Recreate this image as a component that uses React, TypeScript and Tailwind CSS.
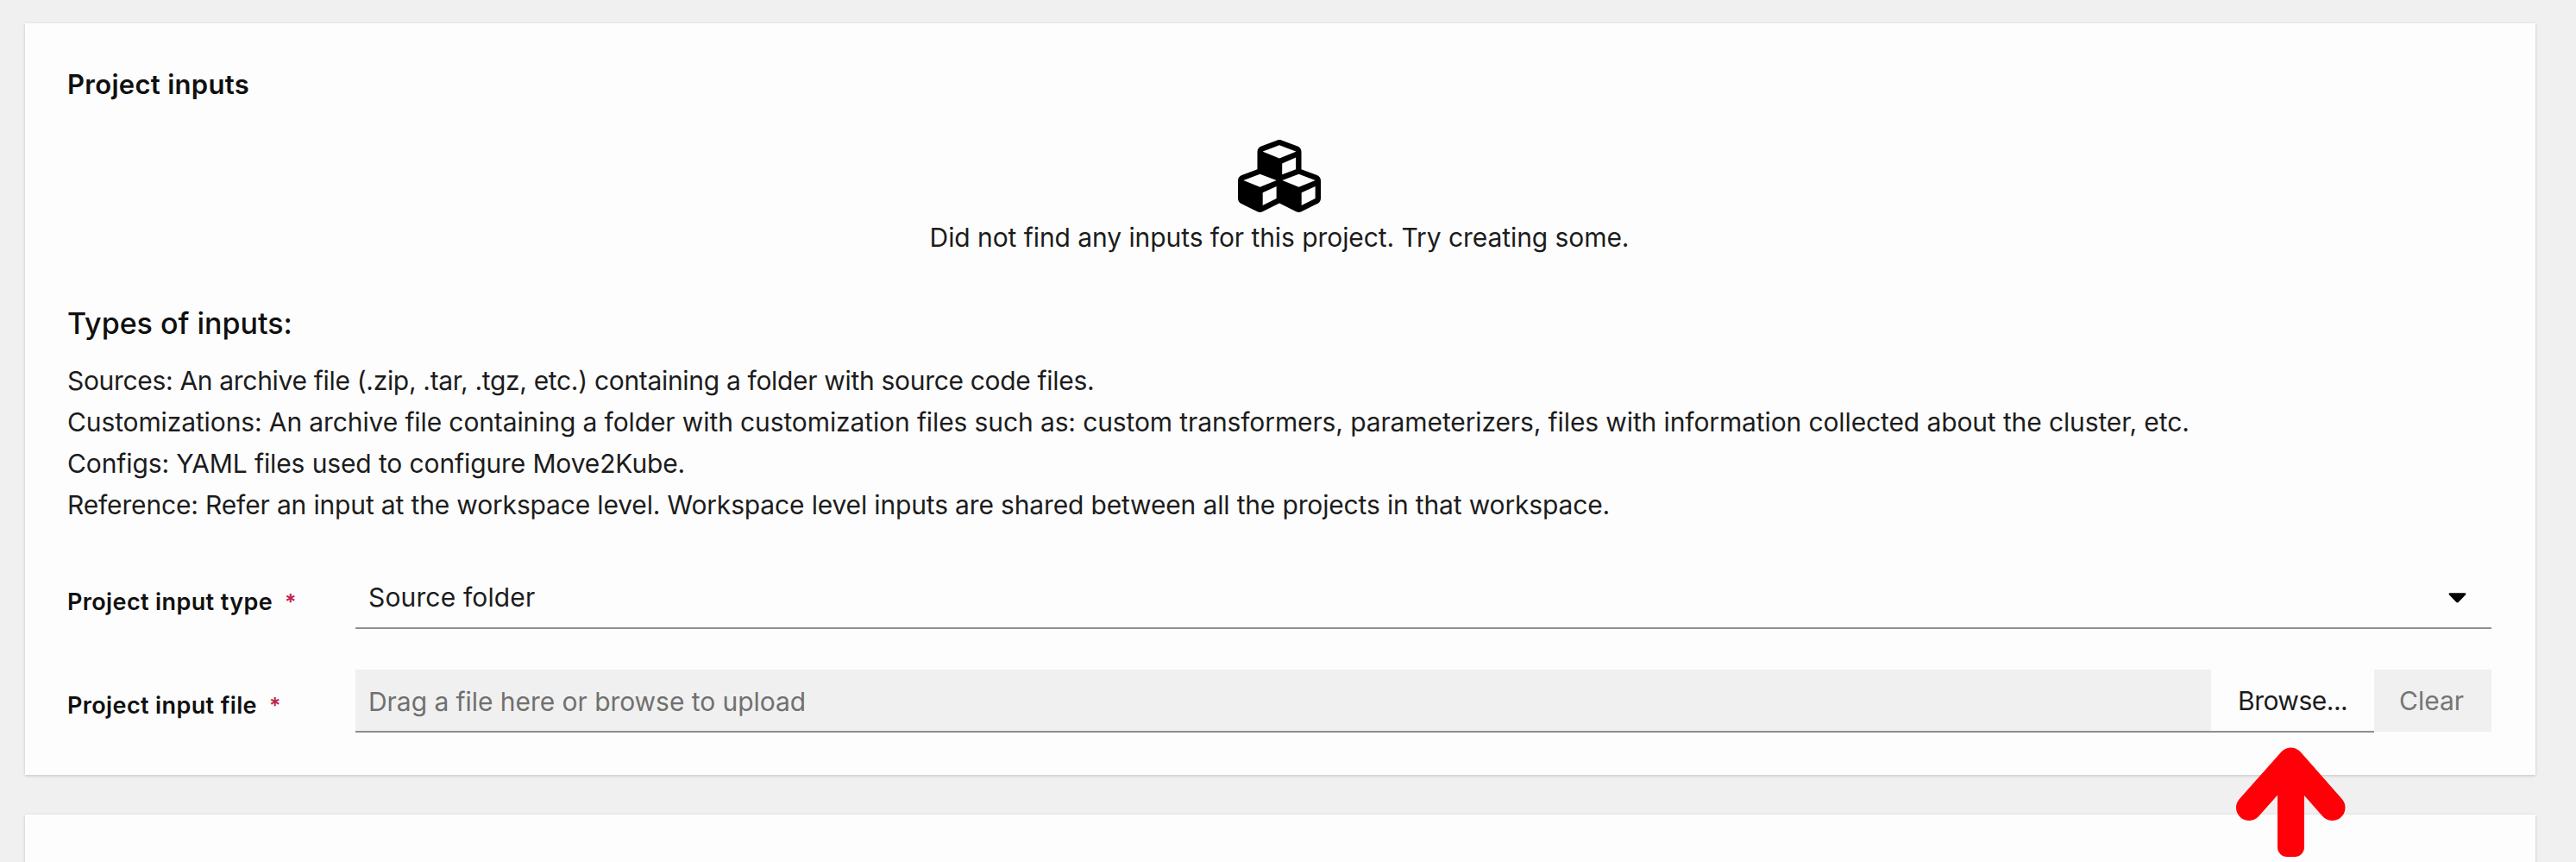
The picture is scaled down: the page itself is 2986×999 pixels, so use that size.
import type { ReactNode } from 'react';
import { FaCubes } from 'react-icons/fa';

const CARD = 'bg-[#fdfdfd] shadow-[0_2px_3px_rgba(0,0,0,0.1),0_0_3px_rgba(0,0,0,0.1)]';

function FormRow({ label, children }: { label: string; children: ReactNode }) {
  return (
    <div className="flex h-[73px]">
      <label className="flex w-[334px] shrink-0 items-start pt-[18px] text-[27px] leading-[48px] font-semibold tracking-[0.38px] text-[#101010]">
        {label}
        <span className="ml-[14px] text-[25px] leading-[48px] text-[#c0244c]">*</span>
      </label>
      {children}
    </div>
  );
}

function UpArrow() {
  return (
    <svg
      className="absolute top-[860px] left-[2585px] h-[139px] w-[140px]"
      viewBox="0 0 140 139"
      fill="none"
      stroke="#ff0008"
      strokeLinecap="round"
      strokeLinejoin="round"
    >
      <path d="M22 76 L70.5 21.5 L118.5 76" strokeWidth="30" />
      <rect x="55" y="24" width="31" height="109" rx="11" fill="#ff0008" stroke="none" />
    </svg>
  );
}

export default function App() {
  return (
    <div className="relative h-[999px] w-[2986px] overflow-hidden bg-[#f0f0f0] pt-[27px] pr-[47px] pl-[29px] font-['Inter',sans-serif] text-[30px] leading-[48px] text-[#1c1c1c]">
      <section className={`${CARD} flex h-[871px] flex-col pt-[47px] pr-[51px] pl-[49px]`}>
        <h2 className="text-[31px] leading-[48px] font-semibold tracking-[0.3px] text-[#101010]">Project inputs</h2>

        <div className="mt-[34px] flex flex-col items-center">
          <FaCubes className="size-[96px] text-black" />
          <p className="-mt-px tracking-[-0.07px]">Did not find any inputs for this project. Try creating some.</p>
        </div>

        <h3 className="mt-[52px] text-[34px] leading-[48px] font-medium text-[#101010]">Types of inputs:</h3>
        <div className="mt-[18px] whitespace-nowrap">
          <p className="tracking-[-0.32px]">
            Sources: An archive file (.zip, .tar, .tgz, etc.) containing a folder with source code files.
          </p>
          <p className="tracking-[-0.116px]">
            Customizations: An archive file containing a folder with customization files such as: custom transformers, parameterizers, files with information collected about the cluster, etc.
          </p>
          <p className="tracking-[-0.12px]">Configs: YAML files used to configure Move2Kube.</p>
          <p className="tracking-[-0.158px]">
            Reference: Refer an input at the workspace level. Workspace level inputs are shared between all the projects in that workspace.
          </p>
        </div>

        <form className="mt-[47px] flex flex-col gap-[47px]">
          <FormRow label="Project input type">
            <div className="flex grow items-center justify-between border-b-2 border-[#8f8f8f] pt-px pr-[29px] pl-[15px]">
              <span className="tracking-[0.15px]">Source folder</span>
              <svg className="mt-[2px] h-[12px] w-[21px]" viewBox="0 0 22 12" fill="#000">
                <path d="M1.5 0 H20.5 Q22 0.6 21 2 L12.5 11 Q11 12.4 9.5 11 L1 2 Q0 0.6 1.5 0 Z" />
              </svg>
            </div>
          </FormRow>

          <FormRow label="Project input file">
            <div className="flex grow items-center border-b-2 border-[#8f8f8f] bg-[#f0f0f0] pt-[3px] pl-[15px] tracking-[-0.05px] text-[#707070]">
              Drag a file here or browse to upload
            </div>
            <button
              type="button"
              className="flex w-[189px] items-center border-b-2 border-[#8f8f8f] pt-px pl-[31px] tracking-[-0.5px]"
            >
              Browse...
            </button>
            <button
              type="button"
              disabled
              className="flex h-[72px] w-[136px] items-center bg-[#f0f0f0] pl-[29px] text-[#757575]"
            >
              Clear
            </button>
          </FormRow>
        </form>
      </section>

      <section className={`${CARD} mt-[46px] h-[120px]`} />

      <UpArrow />
    </div>
  );
}
